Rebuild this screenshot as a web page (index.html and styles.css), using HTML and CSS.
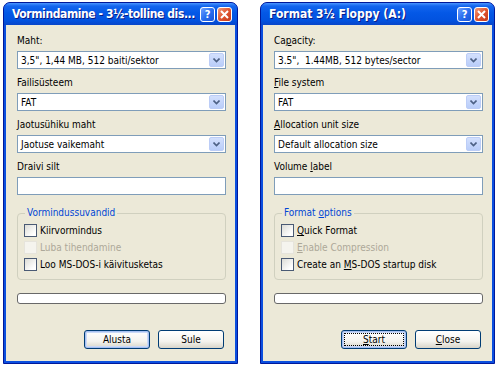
FILE: index.html
```html
<!DOCTYPE html>
<html lang="et">
<head>
    <meta charset="UTF-8">
    <meta name="viewport" content="width=device-width, initial-scale=1.0">
    <title>Vormindamine / Format</title>
    <link rel="stylesheet" href="styles.css">
</head>
<body>
    <div class="desktop">
        <!-- Estonian dialog -->
        <div class="window">
            <div class="titlebar">
                <span class="title title-long">Vormindamine - 3½-tolline dis...</span>
                <div class="title-buttons">
                    <span class="tb tb-help">?</span>
                    <span class="tb tb-close">
                        <svg width="9" height="9" viewBox="0 0 9 9"><path d="M1 1L8 8M8 1L1 8" stroke="#fff" stroke-width="2"/></svg>
                    </span>
                </div>
            </div>
            <div class="body">
                <div class="field">
                    <div class="label">Maht:</div>
                    <div class="combo">
                        <span class="combo-text">3,5", 1,44 MB, 512 baiti/sektor</span>
                        <span class="combo-btn"><svg width="7" height="5" viewBox="0 0 7 5"><path d="M0.5 0.5L3.5 3.5L6.5 0.5" fill="none" stroke="#4d6185" stroke-width="1.6"/></svg></span>
                    </div>
                </div>
                <div class="field">
                    <div class="label">Failisüsteem</div>
                    <div class="combo">
                        <span class="combo-text">FAT</span>
                        <span class="combo-btn"><svg width="7" height="5" viewBox="0 0 7 5"><path d="M0.5 0.5L3.5 3.5L6.5 0.5" fill="none" stroke="#4d6185" stroke-width="1.6"/></svg></span>
                    </div>
                </div>
                <div class="field">
                    <div class="label">Jaotusühiku maht</div>
                    <div class="combo">
                        <span class="combo-text">Jaotuse vaikemaht</span>
                        <span class="combo-btn"><svg width="7" height="5" viewBox="0 0 7 5"><path d="M0.5 0.5L3.5 3.5L6.5 0.5" fill="none" stroke="#4d6185" stroke-width="1.6"/></svg></span>
                    </div>
                </div>
                <div class="field">
                    <div class="label">Draivi silt</div>
                    <div class="textbox"></div>
                </div>

                <fieldset class="options">
                    <legend>Vormindussuvandid</legend>
                    <div class="check"><span class="box"></span><span>Kiirvormindus</span></div>
                    <div class="check disabled"><span class="box"></span><span>Luba tihendamine</span></div>
                    <div class="check"><span class="box"></span><span>Loo MS-DOS-i käivitusketas</span></div>
                </fieldset>

                <div class="progress"></div>

                <div class="actions">
                    <button class="btn default">Alusta</button>
                    <button class="btn">Sule</button>
                </div>
            </div>
        </div>

        <!-- English dialog -->
        <div class="window">
            <div class="titlebar">
                <span class="title">Format 3½ Floppy (A:)</span>
                <div class="title-buttons">
                    <span class="tb tb-help">?</span>
                    <span class="tb tb-close">
                        <svg width="9" height="9" viewBox="0 0 9 9"><path d="M1 1L8 8M8 1L1 8" stroke="#fff" stroke-width="2"/></svg>
                    </span>
                </div>
            </div>
            <div class="body">
                <div class="field">
                    <div class="label">Ca<u>p</u>acity:</div>
                    <div class="combo">
                        <span class="combo-text">3.5",&nbsp; 1.44MB, 512 bytes/sector</span>
                        <span class="combo-btn"><svg width="7" height="5" viewBox="0 0 7 5"><path d="M0.5 0.5L3.5 3.5L6.5 0.5" fill="none" stroke="#4d6185" stroke-width="1.6"/></svg></span>
                    </div>
                </div>
                <div class="field">
                    <div class="label"><u>F</u>ile system</div>
                    <div class="combo">
                        <span class="combo-text">FAT</span>
                        <span class="combo-btn"><svg width="7" height="5" viewBox="0 0 7 5"><path d="M0.5 0.5L3.5 3.5L6.5 0.5" fill="none" stroke="#4d6185" stroke-width="1.6"/></svg></span>
                    </div>
                </div>
                <div class="field">
                    <div class="label"><u>A</u>llocation unit size</div>
                    <div class="combo">
                        <span class="combo-text">Default allocation size</span>
                        <span class="combo-btn"><svg width="7" height="5" viewBox="0 0 7 5"><path d="M0.5 0.5L3.5 3.5L6.5 0.5" fill="none" stroke="#4d6185" stroke-width="1.6"/></svg></span>
                    </div>
                </div>
                <div class="field">
                    <div class="label">Volume <u>l</u>abel</div>
                    <div class="textbox"></div>
                </div>

                <fieldset class="options">
                    <legend>Format <u>o</u>ptions</legend>
                    <div class="check"><span class="box"></span><span><u>Q</u>uick Format</span></div>
                    <div class="check disabled"><span class="box"></span><span><u>E</u>nable Compression</span></div>
                    <div class="check"><span class="box"></span><span>Create an <u>M</u>S-DOS startup disk</span></div>
                </fieldset>

                <div class="progress"></div>

                <div class="actions">
                    <button class="btn default focused"><u>S</u>tart</button>
                    <button class="btn"><u>C</u>lose</button>
                </div>
            </div>
        </div>
    </div>
</body>
</html>
```

FILE: styles.css
```css
body {
    margin: 0;
    padding: 0;
    background-color: #ffffff;
    font-family: "DejaVu Sans Condensed", "DejaVu Sans", sans-serif;
    font-size: 10px;
    color: #000000;
}

.desktop {
    display: flex;
    gap: 22px;
    padding: 2px 0 0 3px;
}

.window {
    width: 235px;
    height: 362px;
    box-sizing: border-box;
    display: flex;
    flex-direction: column;
    background-color: #0b4fdf;
    border: 1px solid #00189a;
    border-radius: 7px 7px 0 0;
    padding: 0 2px 2px;
}

.titlebar {
    height: 22px;
    margin: 0 -2px;
    display: flex;
    align-items: center;
    justify-content: space-between;
    padding: 0 5px 0 8px;
    border-radius: 6px 6px 0 0;
    background: linear-gradient(to bottom, #4a95ff 0%, #1465ee 14%, #0458e6 45%, #0252df 80%, #0846c9 100%);
}

.title {
    color: #ffffff;
    font-family: "DejaVu Sans Condensed", "DejaVu Sans", sans-serif;
    font-weight: bold;
    font-size: 12px;
    text-shadow: 1px 1px 0 #0a1c86;
    white-space: nowrap;
}

.title-long {
    letter-spacing: -0.4px;
}

.title-buttons {
    display: flex;
    gap: 2px;
}

.tb {
    width: 13px;
    height: 13px;
    border: 1px solid #ffffff;
    border-radius: 3px;
    display: flex;
    align-items: center;
    justify-content: center;
    color: #ffffff;
    font-weight: bold;
    font-size: 11px;
}

.tb-help {
    background: linear-gradient(135deg, #6fa0ff 0%, #2a6ff0 50%, #1854d8 100%);
}

.tb-close {
    background: linear-gradient(135deg, #f09a7a 0%, #e0552f 50%, #c5391a 100%);
}

.body {
    flex: 1;
    background-color: #ece9d8;
    padding: 9px 9px 0 11px;
    display: flex;
    flex-direction: column;
}

.field {
    margin-bottom: 7px;
}

.label {
    line-height: 14px;
    margin-bottom: 3px;
}

.combo {
    height: 18px;
    box-sizing: border-box;
    border: 1px solid #7f9db9;
    background-color: #ffffff;
    display: flex;
    align-items: center;
    justify-content: space-between;
    padding: 0 1px 0 3px;
}

.combo-btn {
    width: 15px;
    height: 14px;
    box-sizing: border-box;
    border: 1px solid #bccdf7;
    border-radius: 2px;
    background: linear-gradient(to bottom, #d3e0fd 0%, #b9cdf9 100%);
    display: flex;
    align-items: center;
    justify-content: center;
}

.textbox {
    height: 18px;
    box-sizing: border-box;
    border: 1px solid #7f9db9;
    background-color: #ffffff;
}

.options {
    margin: 4px 0 0;
    padding: 2px 6px 6px 6px;
    border: 1px solid #d0d0bf;
    border-radius: 4px;
}

.options legend {
    color: #0046d5;
    padding: 0 2px;
    margin-left: 1px;
    line-height: 14px;
}

.check {
    display: flex;
    align-items: center;
    height: 17px;
}

.check .box {
    width: 13px;
    height: 13px;
    box-sizing: border-box;
    border: 1px solid #4a5a74;
    background: linear-gradient(135deg, #dcdcd6 0%, #ffffff 80%);
    margin-right: 3px;
}

.check.disabled {
    color: #aca899;
}

.check.disabled .box {
    border-color: #e6e4dc;
    background: #f5f4ee;
}

.progress {
    margin-top: 13px;
    height: 11px;
    box-sizing: border-box;
    border: 1px solid #686868;
    border-radius: 3px;
    background-color: #ffffff;
}

.actions {
    margin-top: 26px;
    display: flex;
    justify-content: flex-end;
    gap: 8px;
    padding-right: 2px;
}

.btn {
    width: 66px;
    height: 19px;
    box-sizing: border-box;
    font-family: inherit;
    font-size: 10px;
    color: #000000;
    border: 1px solid #003c74;
    border-radius: 3px;
    background: linear-gradient(to bottom, #ffffff 0%, #f4f3ee 60%, #d8d5c9 100%);
    padding: 0;
}

.btn.default {
    box-shadow: inset 0 0 0 1px #a6c0f2, inset 0 0 0 2px #cad9f6;
}

.btn.focused {
    outline: 1px dotted #000000;
    outline-offset: -4px;
}
```
